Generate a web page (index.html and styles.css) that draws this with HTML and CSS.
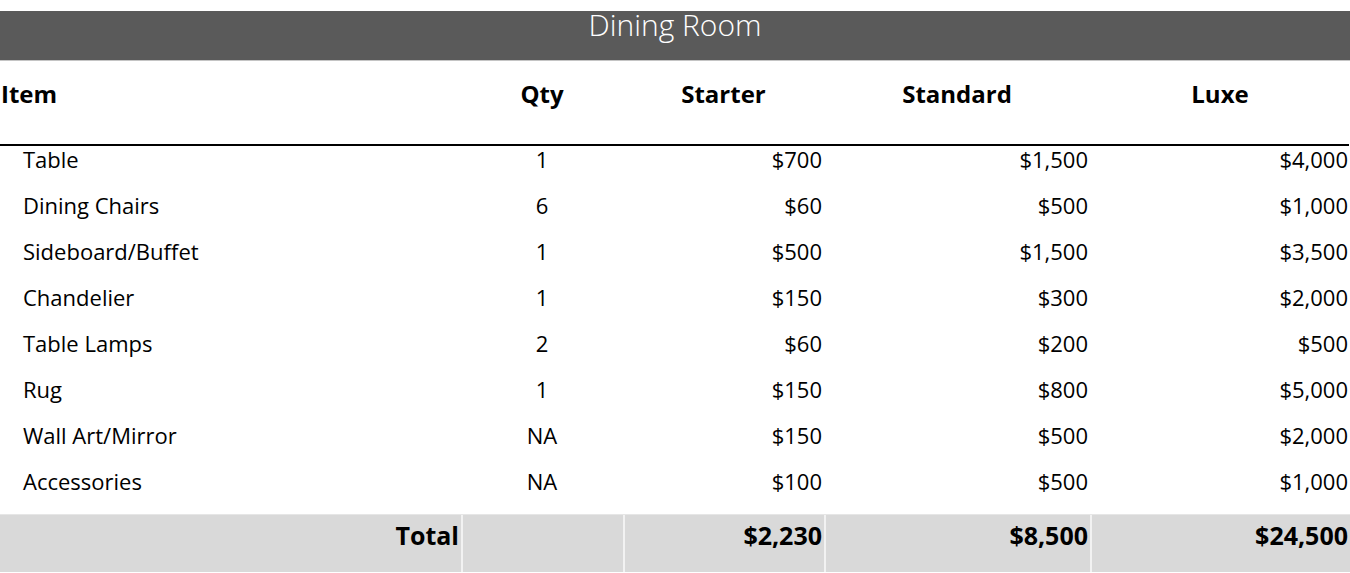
FILE: index.html
```
<!DOCTYPE html>
<html>
<head>
<meta charset="utf-8">
<link rel="stylesheet" href="styles.css">
</head>
<body>
<div class="sheet">
  <div class="title">Dining Room</div>
  <div class="grid head">
    <div class="c left">Item</div>
    <div class="c center">Qty</div>
    <div class="c center">Starter</div>
    <div class="c center">Standard</div>
    <div class="c center">Luxe</div>
  </div>
  <div class="body">
    <div class="grid row"><div class="c item">Table</div><div class="c center">1</div><div class="c right">$700</div><div class="c right">$1,500</div><div class="c right">$4,000</div></div>
    <div class="grid row"><div class="c item">Dining Chairs</div><div class="c center">6</div><div class="c right">$60</div><div class="c right">$500</div><div class="c right">$1,000</div></div>
    <div class="grid row"><div class="c item">Sideboard/Buffet</div><div class="c center">1</div><div class="c right">$500</div><div class="c right">$1,500</div><div class="c right">$3,500</div></div>
    <div class="grid row"><div class="c item">Chandelier</div><div class="c center">1</div><div class="c right">$150</div><div class="c right">$300</div><div class="c right">$2,000</div></div>
    <div class="grid row"><div class="c item">Table Lamps</div><div class="c center">2</div><div class="c right">$60</div><div class="c right">$200</div><div class="c right">$500</div></div>
    <div class="grid row"><div class="c item">Rug</div><div class="c center">1</div><div class="c right">$150</div><div class="c right">$800</div><div class="c right">$5,000</div></div>
    <div class="grid row"><div class="c item">Wall Art/Mirror</div><div class="c center">NA</div><div class="c right">$150</div><div class="c right">$500</div><div class="c right">$2,000</div></div>
    <div class="grid row"><div class="c item">Accessories</div><div class="c center">NA</div><div class="c right">$100</div><div class="c right">$500</div><div class="c right">$1,000</div></div>
  </div>
  <div class="grid total">
    <div class="c right">Total</div>
    <div class="c"></div>
    <div class="c right">$2,230</div>
    <div class="c right">$8,500</div>
    <div class="c right">$24,500</div>
  </div>
</div>
</body>
</html>
```

FILE: styles.css
```
html, body {
  margin: 0;
  padding: 0;
  background: #ffffff;
}
body {
  font-family: "Open Sans", "Lato", "Liberation Sans", sans-serif;
  color: #000;
}
.sheet {
  padding-top: 11px;
  width: 1350px;
}
.title {
  height: 49px;
  background: #5a5a5a;
  color: #fff;
  font-size: 30px;
  font-weight: 300;
  line-height: 28px;
  text-align: center;
  border-bottom: 1px solid #c4c4c4;
}
.grid {
  display: grid;
  grid-template-columns: 461px 162px 201px 266px 260px;
}
.head {
  height: 83px;
  font-weight: 700;
  font-size: 24px;
  line-height: 66px;
  border-bottom: 2px solid #000;
  margin-right: 1px;
}
.head .left {
  padding-left: 1px;
}
.row {
  height: 46px;
  font-size: 22px;
  line-height: 27px;
}
.c {
  white-space: nowrap;
}
.item {
  padding-left: 23px;
}
.center {
  text-align: center;
}
.right {
  text-align: right;
  padding-right: 2px;
}
.total {
  height: 57px;
  background: #d9d9d9;
  border-top: 1px solid #e6e6e6;
  font-weight: 700;
  font-size: 25px;
  line-height: 30px;
}
.total .c {
  padding-top: 5px;
  border-left: 2px solid #f2f2f2;
}
.total .c:first-child {
  border-left: none;
}
```
